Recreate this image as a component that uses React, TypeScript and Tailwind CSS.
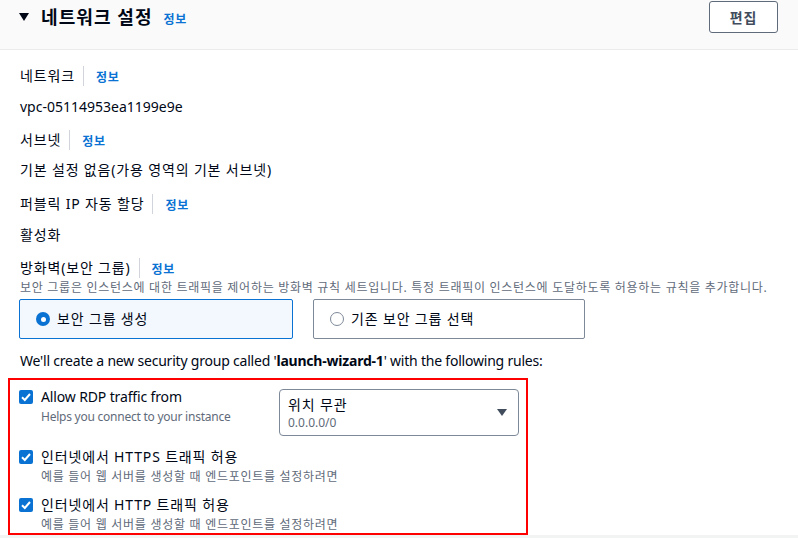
import React from 'react'

const FONT = { fontFamily: '"Noto Sans", "Noto Sans CJK KR", sans-serif' }

/* ── small pieces ─────────────────────────────────────────────────────── */
function InfoLink() {
  return <span className="text-[12px] font-bold leading-[20px] tracking-[0.06em] text-[#0972d3]">정보</span>
}

function FieldLabel({ children }: { children: React.ReactNode }) {
  return (
    <div className="flex h-[20px] items-center">
      <span className="text-[14px] leading-[20px] tracking-[0.06em] text-[#000716]">{children}</span>
      <span className="ml-[8px] h-[20px] border-l border-[#d1d5db]" />
      <span className="pl-[12px]">
        <InfoLink />
      </span>
    </div>
  )
}

function Checkbox() {
  return (
    <span className="mt-[3px] flex h-[14px] w-[14px] shrink-0 items-center justify-center rounded-[2px] bg-[#0972d3]">
      <svg viewBox="0 0 14 14" className="h-[14px] w-[14px]">
        <path d="M3 7.2 L5.8 10 L11 4" fill="none" stroke="#fff" strokeWidth="2" />
      </svg>
    </span>
  )
}

function RuleRow({ label, desc, latin }: { label: string; desc: string; latin?: boolean }) {
  return (
    <div className="flex items-start gap-[8px]">
      <Checkbox />
      <div className="flex flex-col">
        <span className={latin ? 'text-[14px] leading-[20px] tracking-[-0.01em] text-[#000716]' : 'text-[14px] leading-[20px] tracking-[0.06em] text-[#000716]'}>
          {label}
        </span>
        <span className={latin ? 'mt-[2px] text-[12px] leading-[16px] tracking-[-0.02em] text-[#5f6b7a]' : 'mt-[2px] text-[12px] leading-[16px] tracking-[0.06em] text-[#5f6b7a]'}>
          {desc}
        </span>
      </div>
    </div>
  )
}

/* ── page ─────────────────────────────────────────────────────────────── */
export default function App() {
  return (
    <div className="min-h-screen w-[798px] bg-[#f2f3f3]" style={FONT}>
      <div className="bg-white">
        {/* header */}
        <div className="flex h-[50px] items-start justify-between border-b border-[#e9ebed] bg-[#fafafa] pl-[19px] pr-[20px] pt-[1px]">
          <div className="flex h-[32px] items-center">
            <svg viewBox="0 0 10 8" className="h-[8px] w-[10px]">
              <path d="M0 0 H10 L5 8 Z" fill="#000716" />
            </svg>
            <span className="ml-[12px] text-[18px] font-bold leading-[24px] tracking-[0.06em] text-[#000716]">네트워크 설정</span>
            <span className="ml-[11px] mt-[1px]">
              <InfoLink />
            </span>
          </div>
          <button className="flex h-[32px] w-[69px] items-center justify-center rounded-[3px] border border-[#5f6b7a] bg-white text-[14px] font-bold tracking-[0.06em] text-[#414d5c]">
            편집
          </button>
        </div>

        {/* body */}
        <div className="flex flex-col px-[20px] pt-[16px]">
          <FieldLabel>네트워크</FieldLabel>
          <div className="mt-[11px] text-[14px] leading-[20px] text-[#000716]">vpc-05114953ea1199e9e</div>

          <div className="mt-[13px]">
            <FieldLabel>서브넷</FieldLabel>
          </div>
          <div className="mt-[10px] text-[14px] leading-[20px] tracking-[0.06em] text-[#000716]">기본 설정 없음(가용 영역의 기본 서브넷)</div>

          <div className="mt-[14px]">
            <FieldLabel>퍼블릭 IP 자동 할당</FieldLabel>
          </div>
          <div className="mt-[11px] text-[14px] leading-[20px] tracking-[0.06em] text-[#000716]">활성화</div>

          <div className="mt-[13px]">
            <FieldLabel>방화벽(보안 그룹)</FieldLabel>
          </div>
          <div className="mt-[1px] whitespace-nowrap text-[12px] leading-[18px] tracking-[0.06em] text-[#5f6b7a]">
            보안 그룹은 인스턴스에 대한 트래픽을 제어하는 방화벽 규칙 세트입니다. 특정 트래픽이 인스턴스에 도달하도록 허용하는 규칙을 추가합니다.
          </div>

          {/* tiles */}
          <div className="ml-[-1px] mt-[2px] flex gap-[20px]">
            <div className="flex h-[40px] w-[274px] items-center gap-[7px] rounded-[2px] border border-[#0972d3] bg-[#f2f8fd] pl-[16px]">
              <span className="flex h-[14px] w-[14px] items-center justify-center rounded-full bg-[#0972d3]">
                <span className="h-[5px] w-[5px] rounded-full bg-white" />
              </span>
              <span className="text-[14px] leading-[20px] tracking-[0.06em] text-[#000716]">보안 그룹 생성</span>
            </div>
            <div className="flex h-[40px] w-[272px] items-center gap-[7px] rounded-[2px] border border-[#7d8998] bg-white pl-[16px]">
              <span className="h-[14px] w-[14px] rounded-full border-[1.5px] border-[#7d8998]" />
              <span className="text-[14px] leading-[20px] tracking-[0.06em] text-[#000716]">기존 보안 그룹 선택</span>
            </div>
          </div>

          <div className="mt-[12px] text-[14px] leading-[20px] tracking-[-0.015em] text-[#000716]">
            We'll create a new security group called '<span className="font-bold">launch-wizard-1</span>' with the following rules:
          </div>
        </div>

        {/* rules, outlined in red */}
        <div className="relative mb-[-2px] ml-[8px] mt-[7px] w-[520px] border-2 border-[#ff0000] pl-[9px] pt-[7px]">
          <div className="flex items-start">
            <div className="w-[260px]">
              <RuleRow latin label="Allow RDP traffic from" desc="Helps you connect to your instance" />
            </div>
            <div className="mt-[2px] flex h-[47px] w-[240px] items-center justify-between rounded-[4px] border border-[#7d8998] pl-[8px] pr-[11px]">
              <div className="flex flex-col">
                <span className="text-[14px] leading-[20px] tracking-[0.06em] text-[#000716]">위치 무관</span>
                <span className="text-[12px] leading-[16px] text-[#5f6b7a]">0.0.0.0/0</span>
              </div>
              <svg viewBox="0 0 10 7" className="h-[7px] w-[10px]">
                <path d="M0 0 H10 L5 7 Z" fill="#414d5c" />
              </svg>
            </div>
          </div>
          <div className="mt-[11px]">
            <RuleRow label="인터넷에서 HTTPS 트래픽 허용" desc="예를 들어 웹 서버를 생성할 때 엔드포인트를 설정하려면" />
          </div>
          <div className="mt-[10px]">
            <RuleRow label="인터넷에서 HTTP 트래픽 허용" desc="예를 들어 웹 서버를 생성할 때 엔드포인트를 설정하려면" />
          </div>
        </div>
      </div>
    </div>
  )
}
